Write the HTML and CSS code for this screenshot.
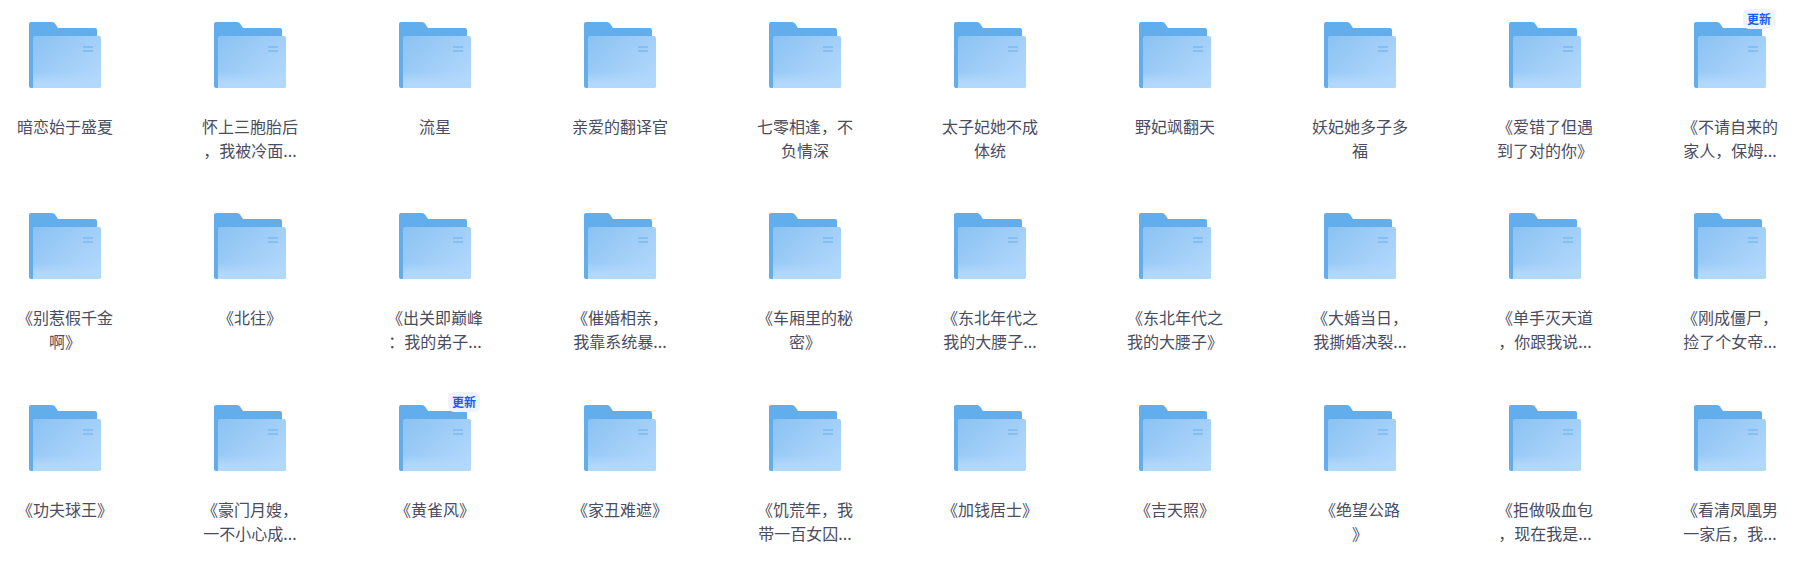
FILE: index.html
```html
<!DOCTYPE html>
<html lang="zh-CN">
<head>
    <meta charset="UTF-8">
    <meta name="viewport" content="width=device-width, initial-scale=1.0">
    <title>文件列表</title>
    <link rel="stylesheet" href="styles.css">
</head>
<body>
    <svg class="sprites" width="0" height="0">
        <defs>
            <linearGradient id="front-fill" x1="0" y1="0" x2="1" y2="0.8">
                <stop offset="0" stop-color="#8bc2f2"/>
                <stop offset="1" stop-color="#b2d8fc"/>
            </linearGradient>
            <linearGradient id="front-glow" x1="0" y1="0" x2="0" y2="1">
                <stop offset="0" stop-color="#b2d8fb" stop-opacity="0"/>
                <stop offset="0.7" stop-color="#b2d8fb"/>
                <stop offset="1" stop-color="#b2d8fb"/>
            </linearGradient>
            <symbol id="folder" viewBox="0 0 72 66">
                <path d="M2 0H23Q25 0 26 1.500L29 6H66Q68 6 68 8V30H4V66H2Q0 66 0 64V2Q0 0 2 0Z" fill="#62aeec"/>
                <rect x="4" y="14" width="68" height="52" rx="2" fill="url(#front-fill)"/>
                <path d="M4 50H72V64Q72 66 70 66H6Q4 66 4 64Z" fill="url(#front-glow)"/>
                <rect x="54" y="24" width="10" height="2" fill="#85bef1"/>
                <rect x="54" y="28" width="10" height="2" fill="#85bef1"/>
            </symbol>
        </defs>
    </svg>

    <div class="file-grid">
        <div class="file-item"><div class="folder"><svg><use href="#folder"/></svg></div><p class="file-name">暗恋始于盛夏</p></div>
        <div class="file-item"><div class="folder"><svg><use href="#folder"/></svg></div><p class="file-name">怀上三胞胎后，我被冷面...</p></div>
        <div class="file-item"><div class="folder"><svg><use href="#folder"/></svg></div><p class="file-name">流星</p></div>
        <div class="file-item"><div class="folder"><svg><use href="#folder"/></svg></div><p class="file-name">亲爱的翻译官</p></div>
        <div class="file-item"><div class="folder"><svg><use href="#folder"/></svg></div><p class="file-name">七零相逢，不负情深</p></div>
        <div class="file-item"><div class="folder"><svg><use href="#folder"/></svg></div><p class="file-name">太子妃她不成体统</p></div>
        <div class="file-item"><div class="folder"><svg><use href="#folder"/></svg></div><p class="file-name">野妃飒翻天</p></div>
        <div class="file-item"><div class="folder"><svg><use href="#folder"/></svg></div><p class="file-name">妖妃她多子多福</p></div>
        <div class="file-item"><div class="folder"><svg><use href="#folder"/></svg></div><p class="file-name">《爱错了但遇到了对的你》</p></div>
        <div class="file-item"><div class="folder"><svg><use href="#folder"/></svg><span class="badge">更新</span></div><p class="file-name">《不请自来的家人，保姆...</p></div>

        <div class="file-item"><div class="folder"><svg><use href="#folder"/></svg></div><p class="file-name">《别惹假千金啊》</p></div>
        <div class="file-item"><div class="folder"><svg><use href="#folder"/></svg></div><p class="file-name">《北往》</p></div>
        <div class="file-item"><div class="folder"><svg><use href="#folder"/></svg></div><p class="file-name">《出关即巅峰：我的弟子...</p></div>
        <div class="file-item"><div class="folder"><svg><use href="#folder"/></svg></div><p class="file-name">《催婚相亲，我靠系统暴...</p></div>
        <div class="file-item"><div class="folder"><svg><use href="#folder"/></svg></div><p class="file-name">《车厢里的秘密》</p></div>
        <div class="file-item"><div class="folder"><svg><use href="#folder"/></svg></div><p class="file-name">《东北年代之我的大腰子...</p></div>
        <div class="file-item"><div class="folder"><svg><use href="#folder"/></svg></div><p class="file-name">《东北年代之我的大腰子》</p></div>
        <div class="file-item"><div class="folder"><svg><use href="#folder"/></svg></div><p class="file-name">《大婚当日，我撕婚决裂...</p></div>
        <div class="file-item"><div class="folder"><svg><use href="#folder"/></svg></div><p class="file-name">《单手灭天道，你跟我说...</p></div>
        <div class="file-item"><div class="folder"><svg><use href="#folder"/></svg></div><p class="file-name">《刚成僵尸，捡了个女帝...</p></div>

        <div class="file-item"><div class="folder"><svg><use href="#folder"/></svg></div><p class="file-name">《功夫球王》</p></div>
        <div class="file-item"><div class="folder"><svg><use href="#folder"/></svg></div><p class="file-name">《豪门月嫂，一不小心成...</p></div>
        <div class="file-item"><div class="folder"><svg><use href="#folder"/></svg><span class="badge">更新</span></div><p class="file-name">《黄雀风》</p></div>
        <div class="file-item"><div class="folder"><svg><use href="#folder"/></svg></div><p class="file-name">《家丑难遮》</p></div>
        <div class="file-item"><div class="folder"><svg><use href="#folder"/></svg></div><p class="file-name">《饥荒年，我带一百女囚...</p></div>
        <div class="file-item"><div class="folder"><svg><use href="#folder"/></svg></div><p class="file-name">《加钱居士》</p></div>
        <div class="file-item"><div class="folder"><svg><use href="#folder"/></svg></div><p class="file-name">《吉天照》</p></div>
        <div class="file-item"><div class="folder"><svg><use href="#folder"/></svg></div><p class="file-name">《绝望公路 》</p></div>
        <div class="file-item"><div class="folder"><svg><use href="#folder"/></svg></div><p class="file-name">《拒做吸血包，现在我是...</p></div>
        <div class="file-item"><div class="folder"><svg><use href="#folder"/></svg></div><p class="file-name">《看清凤凰男一家后，我...</p></div>
    </div>
</body>
</html>
```

FILE: styles.css
```css
body {
    font-family: "Noto Sans CJK SC", "Noto Sans", sans-serif;
    background-color: #fff;
    margin: 0;
    padding: 0;
    overflow: hidden;
}

.sprites {
    display: block;
    height: 0;
}

.file-grid {
    display: grid;
    grid-template-columns: repeat(10, 185px);
    grid-template-rows: 191px 192px 165px;
    padding-top: 22px;
}

.file-item {
    width: 130px;
    display: flex;
    flex-direction: column;
    align-items: center;
}

.folder {
    position: relative;
    width: 72px;
    height: 66px;
}

.folder svg {
    display: block;
    width: 72px;
    height: 66px;
}

.badge {
    position: absolute;
    top: -13px;
    right: -9px;
    width: 32px;
    height: 20px;
    background: #eef3ff;
    border-radius: 6px;
    color: #1a5cf0;
    font-size: 12px;
    font-weight: 700;
    line-height: 20px;
    text-align: center;
}

.file-name {
    width: 98px;
    margin: 26px 0 0;
    color: #4a4c60;
    font-size: 16px;
    line-height: 24px;
    text-align: center;
    word-break: break-all;
    line-break: anywhere;
    text-spacing-trim: space-all;
}
```
